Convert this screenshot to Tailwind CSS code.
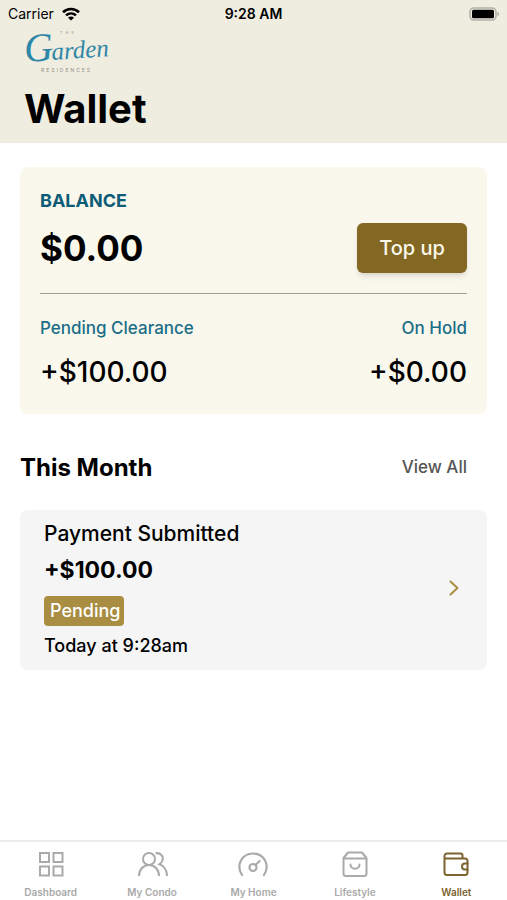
<!DOCTYPE html>
<html lang="en">
<head>
  <meta charset="UTF-8" />
  <meta name="viewport" content="width=device-width, initial-scale=1.0">
  <title>Wallet - The Garden Residences</title>
  <script src="https://cdn.jsdelivr.net/npm/@tailwindcss/browser@4"></script>
</head>
<body class="bg-white text-black font-['Inter',sans-serif]">

  <div class="min-h-screen flex flex-col">

    <!-- Header -->
    <header class="bg-[#efece0] pb-2.5">
      <div class="grid grid-cols-3 items-center h-7 px-2 text-sm">
        <div class="flex items-center gap-2">
          <span>Carrier</span>
          <svg class="w-[18px] h-[14px]" viewBox="0 0 18 14" fill="none" stroke="#000" stroke-width="2.6">
            <path d="M1 5.2C5.4 .9 12.6 .9 17 5.2" />
            <path d="M4 8.4c2.9-2.6 7.1-2.6 10 0" />
            <path d="M9 13.6 6 10.7c1.7-1.5 4.3-1.5 6 0z" fill="#000" stroke="none" />
          </svg>
        </div>
        <span class="text-center font-semibold">9:28 AM</span>
        <svg class="w-[30px] h-[14px] justify-self-end" viewBox="0 0 30 14">
          <rect x="1" y="1" width="26" height="12" rx="4" fill="#efece0" stroke="#b3b1a8" stroke-width="1.6" />
          <rect x="3" y="2.7" width="22" height="8.6" rx="1.5" />
          <path d="M28.5 4.8c2 .8 2 3.6 0 4.4z" fill="#a9a79f" />
        </svg>
      </div>
      <div class="px-6">
        <svg class="w-24 h-[50px] overflow-visible" viewBox="0 0 96 50" role="img" aria-label="The Garden Residences">
          <text x="36" y="6" font-size="4" letter-spacing="3" fill="#8f8f88" font-family="Inter, sans-serif">THE</text>
          <g transform="rotate(-4 0 34)" fill="#2f87a8" font-style="italic" font-family="'Liberation Serif', serif">
            <text x="1" y="34" font-size="40">G</text>
            <text x="28" y="34" font-size="25">arden</text>
          </g>
          <text x="17" y="44" font-size="5" letter-spacing="2" fill="#8f8f88" font-family="Inter, sans-serif">RESIDENCES</text>
        </svg>
        <h1 class="mt-[7px] text-[40px] leading-[48px] font-bold">Wallet</h1>
      </div>
    </header>

    <main class="flex-1 px-5 pt-6">

      <!-- Balance -->
      <section class="bg-[#faf8ec] rounded-lg px-5 py-5">
        <h2 class="text-lg leading-7 font-bold text-[#0c5c78]">BALANCE</h2>
        <div class="flex items-center justify-between mt-2">
          <p class="text-[35px] leading-[50px] font-bold">$0.00</p>
          <button class="w-[110px] h-[50px] rounded-md bg-[#836823] text-[#fbf8ec] text-xl font-medium shadow-md">Top up</button>
        </div>
        <hr class="mt-5 border-t border-[#a09e96]">
        <div class="flex justify-between mt-5">
          <div>
            <h3 class="text-[17px] leading-7 font-medium text-[#1a6e88]">Pending Clearance</h3>
            <p class="mt-2 text-[28px] leading-[44px] font-medium">+$100.00</p>
          </div>
          <div class="text-right">
            <h3 class="text-[17px] leading-7 font-medium text-[#1a6e88]">On Hold</h3>
            <p class="mt-2 text-[28px] leading-[44px] font-medium">+$0.00</p>
          </div>
        </div>
      </section>

      <!-- Transactions -->
      <div class="flex items-center justify-between mt-9 pr-5">
        <h2 class="text-2xl leading-9 font-bold">This Month</h2>
        <a href="#" class="text-[17px] font-medium text-[#555]">View All</a>
      </div>
      <a href="#" class="flex items-center justify-between mt-6 bg-[#f5f5f5] rounded-lg pl-6 pr-7 pt-2 pb-3">
        <div class="flex flex-col items-start">
          <span class="text-[21px] leading-8 font-medium">Payment Submitted</span>
          <span class="mt-1 text-[23px] leading-8 font-bold">+$100.00</span>
          <span class="mt-2.5 pl-1.5 pr-1 rounded-sm bg-[#a98d42] text-white text-lg leading-[30px] font-medium">Pending</span>
          <span class="mt-2 text-lg leading-6 font-medium">Today at 9:28am</span>
        </div>
        <svg class="w-[10px] h-4" viewBox="0 0 10 16" fill="none" stroke="#a98d42" stroke-width="2" stroke-linecap="round" stroke-linejoin="round">
          <path d="M1.5 1.5 8.5 8l-7 6.5" />
        </svg>
      </a>
    </main>

    <!-- Tab bar -->
    <nav class="grid grid-cols-5 border-t-2 border-[#ececec] pt-1.5 text-[10px] leading-4 font-semibold text-[#aaa]">
      <a href="#" class="flex flex-col items-center gap-1">
        <svg class="w-8 h-8" viewBox="0 0 32 32" fill="none" stroke="currentColor" stroke-width="2">
          <rect x="5" y="5" width="9" height="9" /><rect x="18.5" y="5" width="9" height="9" />
          <rect x="5" y="18.5" width="9" height="9" /><rect x="18.5" y="18.5" width="9" height="9" />
        </svg>
        Dashboard
      </a>
      <a href="#" class="flex flex-col items-center gap-1">
        <svg class="w-8 h-8" viewBox="0 0 32 32" fill="none" stroke="currentColor" stroke-width="2">
          <circle cx="13" cy="11" r="6" />
          <path d="M3 28c0-6 4-11 10-11s10 5 10 11M19.5 5.3c5-1 8.500 3 7 7.200-.5 1.600-1.500 2.700-3 3.700 4.500 1.500 7.500 6.300 7.500 11.800" />
        </svg>
        My Condo
      </a>
      <a href="#" class="flex flex-col items-center gap-1">
        <svg class="w-8 h-8" viewBox="0 0 32 32" fill="none" stroke="currentColor" stroke-width="2.2" stroke-linecap="round">
          <path d="M5 27C-1.5 17 5 5.5 16 5.5S33.5 17 27 27" />
          <circle cx="16" cy="19.5" r="3.5" /><path d="m18.5 17 4-4" />
        </svg>
        My Home
      </a>
      <a href="#" class="flex flex-col items-center gap-1">
        <svg class="w-8 h-8" viewBox="0 0 32 32" fill="none" stroke="currentColor" stroke-width="2" stroke-linecap="round" stroke-linejoin="round">
          <path d="M4.5 10 9 4.5h14l4.500 5.500v15.500a2.500 2.500 0 0 1-2.500 2.500H7a2.500 2.500 0 0 1-2.500-2.500zM4.5 10.5h23M11.5 16.5c0 5.500 9 5.500 9 0" />
        </svg>
        Lifestyle
      </a>
      <a href="#" class="flex flex-col items-center gap-1 text-[#7d6330]">
        <svg class="w-8 h-8" viewBox="0 0 32 32" fill="none" stroke="currentColor" stroke-width="2" stroke-linecap="round" stroke-linejoin="round">
          <path d="M22.5 10.5V7.5A2 2 0 0 0 20.5 5.5H7a2.500 2.500 0 0 0-2.500 2.500v2.500H25a2.500 2.500 0 0 1 2.500 2.500v11.500a2.500 2.500 0 0 1-2.500 2.500H7a2.500 2.500 0 0 1-2.500-2.500V10.5" />
          <path d="M27.5 15.5H25a3 3 0 0 0 0 6h2.500" />
        </svg>
        Wallet
      </a>
    </nav>

  </div>

</body>
</html>
